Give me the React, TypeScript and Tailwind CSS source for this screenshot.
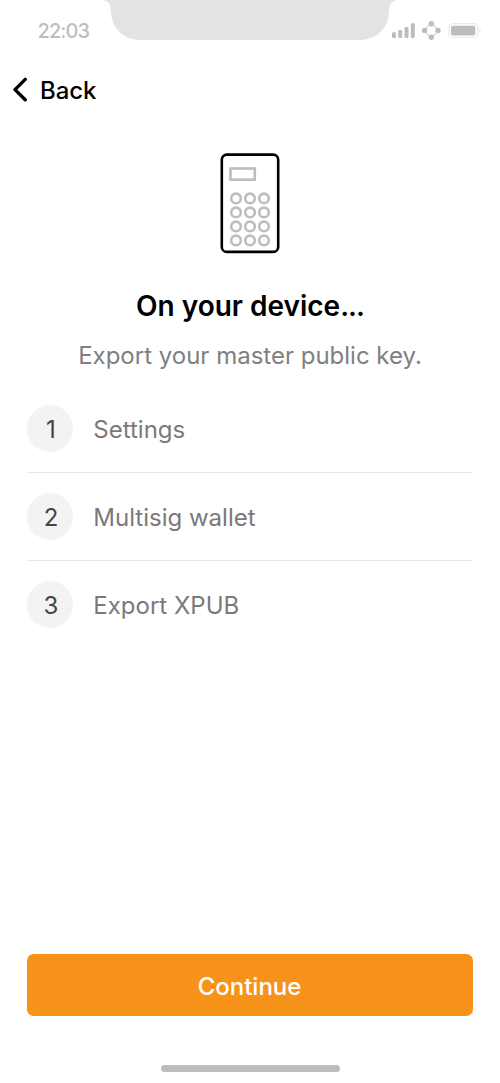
const steps = ["Settings", "Multisig wallet", "Export XPUB"];
const keyRows = [45.4, 59.4, 73.4, 87.4];
const keyColumns = [26, 40, 54];

function StatusBar() {
  return (
    <header className="relative flex h-[60px] items-center justify-between pl-[37.5px] pr-[19px]">
      <svg className="absolute left-[103px] top-0" width="294" height="40" viewBox="0 0 294 40">
        <path d="M0 0H294Q286 1 286 12A28 28 0 0 1 258 40H36A28 28 0 0 1 8 12Q8 1 0 0Z" fill="#e3e3e3" />
      </svg>
      <time className="pt-px text-[20px] font-medium leading-6 tracking-[-0.9px] text-[#bdbdbd]">22:03</time>
      <svg width="90" height="24" viewBox="391 18 90 24" fill="#bdbdbd">
        <rect x="392" y="32.3" width="4" height="5.7" rx="1.3" />
        <rect x="398.2" y="30" width="4" height="8" rx="1.3" />
        <rect x="404.5" y="27" width="4" height="11" rx="1.3" />
        <rect x="410.8" y="23.2" width="4" height="14.8" rx="1.3" />
        <circle cx="431.3" cy="30.5" r="5.5" fill="none" stroke="#bdbdbd" strokeWidth="1" />
        <circle cx="431.3" cy="23.8" r="2.7" />
        <circle cx="431.3" cy="37.3" r="2.7" />
        <circle cx="424.6" cy="30.5" r="2.7" />
        <circle cx="438" cy="30.5" r="2.7" />
        <rect x="449.2" y="23.6" width="28.4" height="13.8" rx="3.5" fill="none" stroke="#ebebeb" strokeWidth="1.3" />
        <rect x="451" y="25.7" width="24.3" height="9.8" rx="2" />
        <path d="M479 28.4Q480.8 29 480.8 30.5T479 32.8Z" fill="#e7e7e7" />
      </svg>
    </header>
  );
}

function DeviceIcon() {
  return (
    <svg width="80" height="100" viewBox="0 0 80 100" fill="none" className="overflow-visible">
      <rect x="11.8" y="1.6" width="56.4" height="97.3" rx="5" stroke="#000" strokeWidth="2.6" />
      <rect x="20.5" y="15.5" width="24.3" height="11.2" stroke="#bdbdbd" strokeWidth="2.6" />
      {keyRows.map((y) =>
        keyColumns.map((x) => (
          <circle key={`${x}-${y}`} cx={x} cy={y} r="4.8" stroke="#bdbdbd" strokeWidth="2.6" />
        )),
      )}
    </svg>
  );
}

export default function App() {
  return (
    <div className="flex h-[1083px] w-[500px] flex-col bg-white font-['Inter',sans-serif]">
      <StatusBar />
      <nav className="flex h-[60px] items-center pl-[13px]">
        <button className="flex items-center gap-[13px] text-2xl font-medium text-black">
          <svg width="14" height="26" viewBox="0 0 14 26" fill="none" stroke="#000" strokeWidth="3.4" strokeLinecap="round" strokeLinejoin="round">
            <path d="M12.2 2.4L2 12.6L12.2 22.8" />
          </svg>
          <span className="pt-0.5 tracking-[-0.1px]">Back</span>
        </button>
      </nav>
      <main className="flex flex-1 flex-col px-[26.67px] pt-[33px]">
        <div className="flex justify-center">
          <DeviceIcon />
        </div>
        <h1 className="mt-[35px] text-center text-[28px] font-semibold leading-9 text-black">
          On your device<span className="tracking-[-1px]">...</span>
        </h1>
        <p className="mt-4 text-center text-2xl leading-8 text-[#808080]">Export your master public key.</p>
        <ol className="mt-[13px]">
          {steps.map((step, index) => (
            <li key={step} className="flex h-[88px] items-center gap-5 border-b border-[#e8e8e8] last:border-transparent">
              <span className="flex size-[46.67px] items-center justify-center rounded-full bg-[#f3f3f3] pl-0.5 pt-0.5 text-2xl text-[#444444]">
                {index + 1}
              </span>
              <span className="pt-0.5 text-2xl text-[#7a7a7a]">{step}</span>
            </li>
          ))}
        </ol>
      </main>
      <footer className="flex flex-col items-center px-[26.67px] pb-[11px]">
        <button className="h-[61.6px] w-full rounded-[6.67px] bg-[#f7931a] pr-px pt-[3px] text-2xl font-medium text-white">Continue</button>
        <div className="mt-[49px] h-[7px] w-[179px] rounded-full bg-[#bdbdbd]" />
      </footer>
    </div>
  );
}
